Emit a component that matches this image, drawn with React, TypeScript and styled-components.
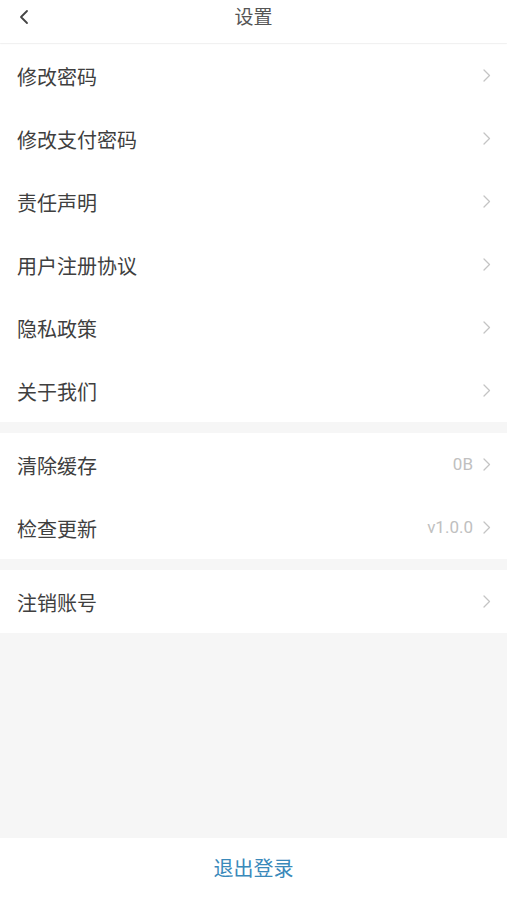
import React from "react";
import styled, { createGlobalStyle } from "styled-components";

const Global = createGlobalStyle`
  html, body { margin: 0; padding: 0; background: #f6f6f6; }
  body { font-family: "Noto Sans CJK SC", "Noto Sans", sans-serif; }
  * { box-sizing: border-box; }
`;

const Page = styled.div`
  width: 507px;
  height: 900px;
  display: flex;
  flex-direction: column;
  background: #f6f6f6;
`;

const Header = styled.div`
  height: 43px;
  background: #fff;
  display: flex;
  align-items: center;
  justify-content: center;
  position: relative;
  box-shadow: 0 1px 2px rgba(0, 0, 0, 0.03);
`;

const Back = styled.div`
  position: absolute;
  left: 17px;
  top: 9px;
  width: 16px;
  height: 18px;
  display: flex;
`;

const Title = styled.div`
  font-size: 19px;
  color: #555;
  line-height: 1;
  margin-top: -13px;
`;

const Group = styled.div<{ $gap?: number }>`
  background: #fff;
  margin-top: ${(p) => p.$gap ?? 0}px;
`;

const Row = styled.div`
  height: 63px;
  display: flex;
  align-items: center;
  padding: 0 16px 0 17px;
`;

const Label = styled.div`
  flex: 1;
  font-size: 20px;
  color: #3f3f3f;
  line-height: 1;
  margin-top: 2px;
`;

const Value = styled.div`
  font-size: 17px;
  color: #c0c0c0;
  font-family: "Roboto", "Noto Sans", sans-serif;
  margin-right: 10px;
  margin-top: -2px;
`;

const Footer = styled.div`
  margin-top: auto;
  height: 62px;
  background: #fff;
  display: flex;
  align-items: center;
  justify-content: center;
`;

const Logout = styled.div`
  font-size: 20px;
  color: #3a89ba;
  line-height: 1;
  margin-bottom: 2px;
`;

const Chevron = () => (
  <svg width="8" height="13" viewBox="0 0 8 13">
    <path d="M1 1 L6.5 6.5 L1 12" fill="none" stroke="#c4c4c4" strokeWidth="1.3" strokeLinecap="round" strokeLinejoin="round" />
  </svg>
);

const items1 = ["修改密码", "修改支付密码", "责任声明", "用户注册协议", "隐私政策", "关于我们"];
const items2: [string, string][] = [["清除缓存", "0B"], ["检查更新", "v1.0.0"]];

export default function App() {
  return (
    <Page>
      <Global />
      <Header>
        <Back>
          <svg width="14" height="16" viewBox="0 0 14 16">
            <path d="M10 2 L4 8 L10 14" fill="none" stroke="#444" strokeWidth="1.8" strokeLinecap="round" strokeLinejoin="round" />
          </svg>
        </Back>
        <Title>设置</Title>
      </Header>
      <Group $gap={1}>
        {items1.map((t) => (
          <Row key={t}>
            <Label>{t}</Label>
            <Chevron />
          </Row>
        ))}
      </Group>
      <Group $gap={11}>
        {items2.map(([t, v]) => (
          <Row key={t}>
            <Label>{t}</Label>
            <Value>{v}</Value>
            <Chevron />
          </Row>
        ))}
      </Group>
      <Group $gap={11}>
        <Row>
          <Label>注销账号</Label>
          <Chevron />
        </Row>
      </Group>
      <Footer>
        <Logout>退出登录</Logout>
      </Footer>
    </Page>
  );
}
